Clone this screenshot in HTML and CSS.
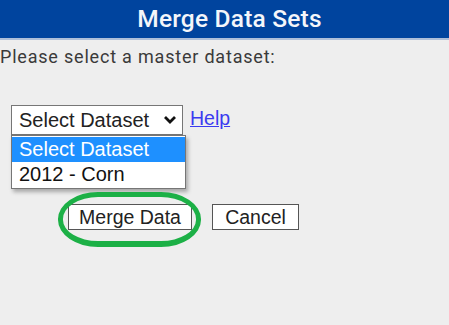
FILE: index.html
```html
<!DOCTYPE html>
<html lang="en">
<head>
    <meta charset="UTF-8">
    <meta name="viewport" content="width=device-width, initial-scale=1.0">
    <title>Merge Data Sets</title>
    <link rel="stylesheet" href="styles.css">
</head>
<body>

    <header class="title-bar">
        <h1>Merge Data Sets</h1>
    </header>

    <div class="content">
        <p class="prompt">Please select a master dataset:</p>

        <div class="picker-row">
            <div class="select-box">
                <span class="select-value">Select Dataset</span>
                <svg class="chevron" width="14" height="10" viewBox="0 0 14 10">
                    <path d="M2 2 L7 7 L12 2" fill="none" stroke="#111" stroke-width="2.8"/>
                </svg>
                <ul class="select-list">
                    <li class="selected">Select Dataset</li>
                    <li>2012 - Corn</li>
                </ul>
            </div>
            <a href="#" class="help-link">Help</a>
        </div>

        <div class="actions">
            <button class="btn btn-merge">Merge Data</button>
            <button class="btn btn-cancel">Cancel</button>
        </div>
    </div>

</body>
</html>
```

FILE: styles.css
```css
*,
*::before,
*::after {
    margin: 0;
    padding: 0;
    box-sizing: border-box;
}

body {
    width: 100%;
    height: 100vh;
    background-color: #eeeeee;
    font-family: 'Roboto', 'Liberation Sans', sans-serif;
    color: #333;
    overflow: hidden;
}

.title-bar {
    height: 40px;
    background-color: #00449e;
    border-bottom: 2px solid #aebfd9;
    display: flex;
    justify-content: center;
    padding-left: 10px;
}

.title-bar h1 {
    font-size: 24.5px;
    font-weight: 500;
    color: #f4f6fa;
    line-height: 37px;
    letter-spacing: 0.2px;
}

.prompt {
    font-size: 18px;
    letter-spacing: 0.8px;
    color: #3a3a3a;
    margin-top: 6px;
    line-height: 22px;
}

.picker-row {
    display: flex;
    align-items: flex-start;
    margin-top: 37px;
    padding-left: 11px;
}

.select-box {
    position: relative;
    width: 172px;
    height: 30px;
    background: #fff;
    border: 1px solid #767676;
    font-family: 'Liberation Sans', Arial, sans-serif;
    font-size: 20px;
    color: #222;
    display: flex;
    align-items: center;
    padding-left: 7px;
}

.chevron {
    margin-left: auto;
    margin-right: 5px;
}

.select-list {
    position: absolute;
    top: 29px;
    left: -1px;
    width: 175px;
    list-style: none;
    background: #fff;
    border: 1px solid #767676;
    box-shadow: 2px 3px 4px rgba(0, 0, 0, 0.3);
    padding: 1px 0;
}

.select-list li {
    height: 25px;
    line-height: 25px;
    padding-left: 7px;
    color: #111;
}

.select-list li.selected {
    background-color: #1e90ff;
    color: #fff;
}

.help-link {
    font-family: 'Liberation Sans', Arial, sans-serif;
    font-size: 19.5px;
    color: #3b3bf0;
    margin-left: 7px;
    margin-top: 2px;
}

.actions {
    display: flex;
    gap: 20px;
    margin-top: 69px;
    padding-left: 68px;
}

.btn {
    height: 26px;
    background: #fff;
    border: 1px solid #555;
    font-family: 'Liberation Sans', Arial, sans-serif;
    font-size: 19.5px;
    color: #222;
    cursor: pointer;
}

.btn-merge {
    position: relative;
    width: 124px;
}

/* green hand-drawn highlight */
.btn-merge::after {
    content: "";
    position: absolute;
    left: -11px;
    top: -13px;
    width: 143px;
    height: 55px;
    border: 5px solid #1cb046;
    border-bottom-width: 6px;
    border-radius: 40px / 27px;
}

.btn-cancel {
    width: 87px;
}
```
